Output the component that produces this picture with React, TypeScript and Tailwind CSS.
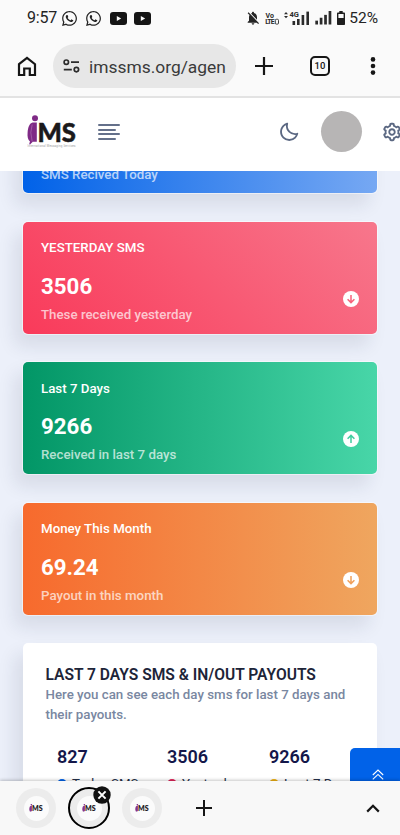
import React from "react";
import { FaWhatsapp } from "react-icons/fa";
import { MdNotificationsOff } from "react-icons/md";
import { BiMoon, BiCog } from "react-icons/bi";

const stats = [
  {
    title: "YESTERDAY SMS",
    value: "3506",
    note: "These received yesterday",
    up: false,
    bg: "bg-[linear-gradient(45deg,#f93a5a,#f7778c)]",
    icon: "text-[#f7627b]",
  },
  {
    title: "Last 7 Days",
    value: "9266",
    note: "Received in last 7 days",
    up: true,
    bg: "bg-[linear-gradient(to_left,#48d6a8,#029666)]",
    icon: "text-[#40cda0]",
  },
  {
    title: "Money This Month",
    value: "69.24",
    note: "Payout in this month",
    up: false,
    bg: "bg-[linear-gradient(to_left,#efa65f,#f76a2d)]",
    icon: "text-[#f0a05b]",
  },
];

const totals = [
  { value: "827", label: "Today SMS", dot: "bg-[#0162e8]", width: "w-[110px]" },
  { value: "3506", label: "Yesterday", dot: "bg-[#e0245a]", width: "w-[102px]" },
  { value: "9266", label: "Last 7 Days", dot: "bg-[#eeb012]", width: "w-[108px]" },
];

const Logo = ({ className, tagline }: { className: string; tagline?: boolean }) => (
  <svg viewBox="0 0 50 33" className={`shrink-0 ${className}`}>
    <circle cx="8" cy="3.2" r="3" fill="#7f2a86" />
    <path
      d="M5.6 7.6H9.8V26.8H5.8L3 29.6Q1.6 29.6 3 26.4C.9 25 .2 21.5.6 17.5 1 12 2.6 8.4 5.6 7.6z"
      fill="#7f2a86"
    />
    <path d="M5.2 9.5Q2.4 17 5.2 26.5" stroke="#b98abd" strokeWidth="0.5" fill="none" />
    <text
      x="10.5"
      y="26.6"
      textLength="38.5"
      lengthAdjust="spacingAndGlyphs"
      fontFamily="Lato, sans-serif"
      fontWeight="900"
      fontSize="27"
      fill="#1b191b"
      stroke="#1b191b"
      strokeWidth="0.5"
    >
      MS
    </text>
    {tagline && (
      <text x="0.5" y="31.8" textLength="48" fontFamily="Roboto, sans-serif" fontSize="2.8" fill="#999">
        International Messaging Services
      </text>
    )}
  </svg>
);

const YoutubeIcon = () => (
  <svg viewBox="0 0 17 13" className="h-[13px] w-[17px]">
    <rect width="17" height="13" rx="3" fill="#151515" />
    <path d="M6.8 3.9v5.2l4.4-2.6z" fill="#fafafa" />
  </svg>
);

const Signal = ({ className }: { className: string }) => (
  <svg viewBox="0 0 17 14" className={className} fill="#2b2b2b">
    <rect x="0" y="10" width="2.8" height="4" />
    <rect x="4.6" y="7" width="2.8" height="7" />
    <rect x="9.2" y="4" width="2.8" height="10" />
    <rect x="13.8" y="0" width="2.8" height="14" />
  </svg>
);

const StatusBar = () => (
  <div className="flex h-9 items-center pr-[22px] pl-[27px] text-[#242424]">
    <span className="w-[34px] text-[16px] leading-9 tracking-[-0.2px]">9:57</span>
    <FaWhatsapp className="mr-[7px] size-[17px]" />
    <FaWhatsapp className="mr-2 size-[17px]" />
    <div className="flex gap-[7px]">
      <YoutubeIcon />
      <YoutubeIcon />
    </div>
    <div className="ml-auto flex items-center">
      <MdNotificationsOff className="mr-[4px] size-[16px]" />
      <svg viewBox="0 0 14 13" className="mr-[5px] h-[13px] w-[14px]" fill="#2b2b2b">
        <text x="0.5" y="5.8" fontFamily="Roboto, sans-serif" fontWeight="700" fontSize="7">
          Vo
        </text>
        <text x="0.2" y="12.2" textLength="9.6" fontFamily="Roboto, sans-serif" fontWeight="700" fontSize="7">
          LTE
        </text>
        <rect x="10.3" y="7.3" width="3.2" height="4.8" rx="1" fill="none" stroke="#2b2b2b" strokeWidth="0.9" />
      </svg>
      <svg viewBox="0 0 27 16" className="mr-[4px] h-4 w-[27px]" fill="#2b2b2b">
        <path d="M0 4.2 2 2l2 2.2zM0 6h4L2 8.2z" />
        <text x="5.5" y="7.2" fontFamily="Roboto, sans-serif" fontWeight="700" fontSize="7.5">
          4G
        </text>
        <rect x="8.5" y="11" width="2.6" height="4" />
        <rect x="13" y="9" width="2.6" height="6" />
        <rect x="17.6" y="5" width="2.6" height="10" />
        <rect x="22.4" y="1.6" width="2.6" height="13.4" />
      </svg>
      <Signal className="mr-[5px] h-[13.5px] w-[17px]" />
      <svg viewBox="0 0 8 14" className="mr-[4px] h-[14px] w-[8px]">
        <path d="M2.3 0h3.4v1.6H7.2q.8 0 .8.8V13.2q0 .8-.8.8H.8Q0 14 0 13.2V2.4q0-.8.8-.8h1.5z" fill="#1e1e1e" />
        <rect x="1.4" y="3" width="5.2" height="4" fill="#fafafa" />
      </svg>
      <span className="text-[15.5px] leading-9">52%</span>
    </div>
  </div>
);

const BrowserBar = () => (
  <div className="flex h-[62px] items-center border-b-2 border-[#e3e3e3] pl-[17px]">
    <svg viewBox="0 0 20 21" className="h-[21px] w-5" fill="none" stroke="#161616" strokeWidth="2.2">
      <path d="M2 8.2 10 2l8 6.2V19h-5.2v-6.5H7.2V19H2z" />
    </svg>
    <div className="ml-4 flex h-11 w-[183px] items-center rounded-full bg-[#e7e7e7] pl-[10px]">
      <svg viewBox="0 0 17 14" className="h-[14px] w-[17px]" fill="none" stroke="#2b2b2b" strokeWidth="1.7">
        <circle cx="3.3" cy="3.2" r="2.2" />
        <path d="M8 3.2h8M.8 10.6h8" />
        <circle cx="13.4" cy="10.6" r="2.2" />
      </svg>
      <span className="ml-[9px] pt-[2px] text-[17.4px] whitespace-nowrap text-[#3a3a3a]">imssms.org/agen</span>
    </div>
    <svg viewBox="0 0 18 18" className="ml-[19px] size-[18px]" stroke="#161616" strokeWidth="2.2">
      <path d="M9 0v18M0 9h18" />
    </svg>
    <div className="ml-[37px] flex size-5 items-center justify-center rounded-[5px] border-2 border-[#161616] pt-px text-[9.5px] font-medium text-[#161616]">
      10
    </div>
    <svg viewBox="0 0 6 18" className="ml-[40px] h-[18px] w-[6px]" fill="#161616">
      <circle cx="3" cy="2.4" r="2.3" />
      <circle cx="3" cy="9" r="2.3" />
      <circle cx="3" cy="15.6" r="2.3" />
    </svg>
  </div>
);

const AppHeader = () => (
  <div className="flex h-[72.5px] shrink-0 items-center overflow-hidden bg-white pb-[5px] pl-[27px]">
    <Logo className="h-[33px] w-[50px]" tagline />
    <div className="ml-[21px] flex w-[22px] shrink-0 flex-col gap-[2.5px]">
      <span className="h-[2px] w-[22px] rounded bg-[#64708a]" />
      <span className="h-[2px] w-[18px] rounded bg-[#64708a]" />
      <span className="h-[2px] w-[22px] rounded bg-[#64708a]" />
      <span className="h-[2px] w-[18px] rounded bg-[#64708a]" />
    </div>
    <BiMoon className="ml-[158px] size-[22px] shrink-0 text-[#5b6882]" />
    <div className="ml-[20.5px] size-[41px] shrink-0 rounded-full bg-[#b7b5b5]" />
    <BiCog className="ml-[19.5px] size-[22px] shrink-0 text-[#5b6882]" />
  </div>
);

const StatCard = ({ item }: { item: (typeof stats)[number] }) => (
  <div
    className={`flex h-[112px] shrink-0 justify-between rounded-[5px] pt-[16.5px] pr-[18px] pl-[18px] text-white shadow-[-8px_12px_18px_0_rgba(25,42,70,0.1)] ring-1 ring-white/50 ${item.bg}`}
  >
    <div className="flex flex-col">
      <span className="text-[13.3px] leading-[19px] font-medium">{item.title}</span>
      <span className="mt-[16.5px] text-[22.3px] leading-6 font-bold">{item.value}</span>
      <span className="mt-[7px] text-[13.3px] leading-[19px] font-medium text-white/70">{item.note}</span>
    </div>
    <svg viewBox="0 0 16 16" className={`mt-[52.5px] size-4 ${item.icon}`}>
      <circle cx="8" cy="8" r="8" fill="#fff" />
      <path
        d={item.up ? "M8 12V4.5M4.6 7.8 8 4.4l3.4 3.4" : "M8 4v7.5M4.6 8.2 8 11.6l3.4-3.4"}
        stroke="currentColor"
        strokeWidth="1.5"
        fill="none"
      />
    </svg>
  </div>
);

const BottomBar = () => (
  <div className="relative flex h-[54px] shrink-0 items-center bg-[#f8f8f8] pl-4 shadow-[0_-1px_3px_rgba(0,0,0,0.22)]">
    <div className="flex size-10 items-center justify-center rounded-full bg-[#ececec]">
      <div className="flex size-[25px] items-center justify-center rounded-full bg-[#fbfbfb]">
        <Logo className="h-[9px] w-[14px]" />
      </div>
    </div>
    <div className="relative ml-3 flex size-[42px] items-center justify-center rounded-full border-2 border-black bg-[#ececec]">
      <div className="flex size-[25px] items-center justify-center rounded-full bg-[#fbfbfb]">
        <Logo className="h-[9px] w-[14px]" />
      </div>
      <svg viewBox="0 0 18 18" className="absolute -top-[3px] -right-[3px] size-[18px]">
        <circle cx="9" cy="9" r="8.7" fill="#111" />
        <path d="m5.4 5.4 7.2 7.2m0-7.2-7.2 7.2" stroke="#fff" strokeWidth="2" />
      </svg>
    </div>
    <div className="ml-3 flex size-10 items-center justify-center rounded-full bg-[#ececec]">
      <div className="flex size-[25px] items-center justify-center rounded-full bg-[#fbfbfb]">
        <Logo className="h-[9px] w-[14px]" />
      </div>
    </div>
    <svg viewBox="0 0 16 16" className="ml-[34px] size-4" stroke="#161616" strokeWidth="2">
      <path d="M8 0v16M0 8h16" />
    </svg>
    <svg viewBox="0 0 14 9" className="ml-[154px] h-[9px] w-[14px]" fill="none" stroke="#161616" strokeWidth="2.2">
      <path d="m1.2 7.6 5.8-5.8 5.8 5.8" />
    </svg>
  </div>
);

const App = () => {
  return (
    <div className="flex h-[835px] w-[400px] flex-col overflow-hidden bg-[#fafafa] font-['Roboto',sans-serif]">
      <StatusBar />
      <BrowserBar />
      <AppHeader />
      <div className="relative flex min-h-0 flex-1 flex-col gap-[28.5px] overflow-hidden bg-[#ecf0fa] px-[23px]">
        {/* first card is scrolled under the header */}
        <div className="-mt-[89.5px] flex h-[112px] shrink-0 flex-col justify-end rounded-[5px] bg-[linear-gradient(to_left,#76a8f3,#0162e8)] pb-[9.5px] pl-[18px] shadow-[-8px_12px_18px_0_rgba(25,42,70,0.1)] ring-1 ring-white/50">
          <span className="text-[13.3px] leading-[19px] font-medium text-white/70">SMS Recived Today</span>
        </div>
        {stats.map((item) => (
          <StatCard key={item.title} item={item} />
        ))}
        <div className="h-[300px] shrink-0 rounded-[5px] bg-white pt-[22px] pl-[22.5px] shadow-[-8px_12px_18px_0_rgba(25,42,70,0.1)]">
          <h2 className="text-[15.6px] leading-5 font-semibold whitespace-nowrap text-[#1d2438]">
            LAST 7 DAYS SMS &amp; IN/OUT PAYOUTS
          </h2>
          <p className="w-[315px] text-[13.3px] leading-5 font-medium text-[#7987a1]">
            Here you can see each day sms for last 7 days and their payouts.
          </p>
          <div className="mt-[20px] flex pl-[11.5px]">
            {totals.map((item) => (
              <div key={item.label} className={item.width}>
                <div className="text-[18px] leading-6 font-semibold text-[#14174a]">{item.value}</div>
                <div className="mt-[5px] flex items-center">
                  <span className={`size-[10px] rounded-full ${item.dot}`} />
                  <span className="ml-[5px] text-[13.3px] leading-5 whitespace-nowrap text-[#242f48]">{item.label}</span>
                </div>
              </div>
            ))}
          </div>
        </div>
        <div className="absolute right-0 bottom-0 flex h-[33px] w-[50px] justify-center rounded-tl-[5px] bg-[#0162e8] pt-[21px] pl-[5px]">
          <svg viewBox="0 0 12 11" className="h-[11px] w-3" fill="none" stroke="#fff" strokeWidth="1.1">
            <path d="m.8 6 5.2-5 5.2 5M.8 10.4l5.2-5 5.2 5" />
          </svg>
        </div>
      </div>
      <BottomBar />
    </div>
  );
};

export default App;
